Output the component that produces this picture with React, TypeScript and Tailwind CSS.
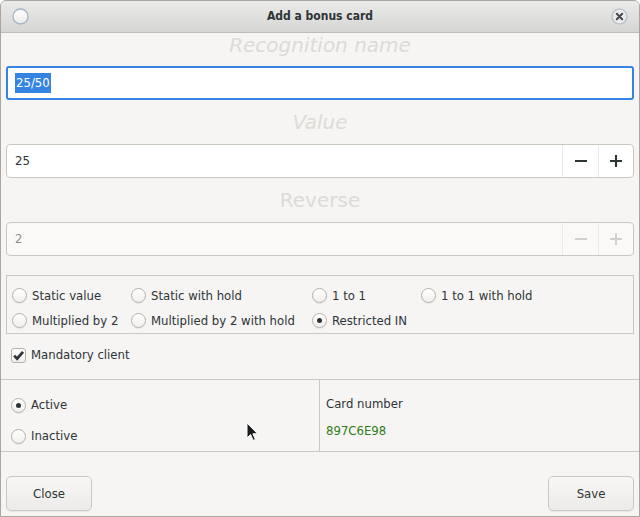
import * as React from 'react';

const font = { fontFamily: '"DejaVu Sans Condensed", "DejaVu Sans", sans-serif' };
const wideFont = { fontFamily: '"DejaVu Sans", sans-serif' };

const Radio: React.FC<{ checked?: boolean }> = ({ checked }) => (
    <span className="relative inline-flex h-[15px] w-[15px] shrink-0 items-center justify-center rounded-full border border-[#b6b1ab] bg-gradient-to-b from-white to-[#f1efed] shadow-[0_1px_0_rgba(0,0,0,0.06)]">
        {checked && <span className="h-[5px] w-[5px] rounded-full bg-[#2e3436]" />}
    </span>
);

const RadioOption: React.FC<{ label: string; checked?: boolean; className?: string }> = ({ label, checked, className }) => (
    <label className={`flex items-center gap-[5px] text-[13px] text-[#2e3436] ${className ?? ''}`}>
        <Radio checked={checked} />
        <span>{label}</span>
    </label>
);

const Heading: React.FC<{ text: string; italic?: boolean; className?: string }> = ({ text, italic, className }) => (
    <div className={`flex justify-center text-[20px] text-[#dedad6] ${italic ? 'italic' : ''} ${className ?? ''}`} style={wideFont}>
        {text}
    </div>
);

const SpinEntry: React.FC<{ value: string; disabled?: boolean }> = ({ value, disabled }) => {
    const iconColor = disabled ? 'text-[#d3d0cc]' : 'text-[#2e3436]';
    return (
        <div className={`flex h-[34px] rounded-[4px] border border-[#cdc7c2] ${disabled ? 'bg-[#faf9f8]' : 'bg-white'}`}>
            <div className={`flex flex-1 items-center pl-[8px] text-[13px] ${disabled ? 'text-[#8b8e8f]' : 'text-[#2e3436]'}`}>{value}</div>
            <div className={`flex w-[36px] items-center justify-center border-l border-[#ebe9e6] ${iconColor}`}>
                <svg width="12" height="12" viewBox="0 0 12 12"><rect x="0" y="5" width="12" height="2" fill="currentColor" /></svg>
            </div>
            <div className={`flex w-[35px] items-center justify-center border-l border-[#ebe9e6] ${iconColor}`}>
                <svg width="12" height="12" viewBox="0 0 12 12"><rect x="0" y="5" width="12" height="2" fill="currentColor" /><rect x="5" y="0" width="2" height="12" fill="currentColor" /></svg>
            </div>
        </div>
    );
};

const DialogButton: React.FC<{ label: string }> = ({ label }) => (
    <button className="flex h-[35px] w-[86px] items-center justify-center rounded-[5px] border border-[#cdc7c2] bg-gradient-to-b from-[#f8f7f6] to-[#edebe9] text-[13px] text-[#2e3436] shadow-[0_1px_0_rgba(0,0,0,0.05)]">
        {label}
    </button>
);

export default function App() {
    return (
        <div className="relative flex h-[517px] w-[640px] flex-col overflow-hidden rounded-t-[6px] border border-[#aaa59e] bg-[#f6f5f4]" style={font}>
            {/* title bar */}
            <div className="flex h-[32px] shrink-0 items-center justify-between border-b border-[#bfbbb6] bg-gradient-to-b from-[#ebebea] to-[#d5d5d4] px-[11px]">
                <svg width="17" height="17" viewBox="0 0 17 17">
                    <defs>
                        <linearGradient id="wm" x1="0" y1="0" x2="0" y2="1">
                            <stop offset="0" stopColor="#ffffff" />
                            <stop offset="1" stopColor="#ececec" />
                        </linearGradient>
                    </defs>
                    <circle cx="8.5" cy="8.5" r="7.5" fill="url(#wm)" stroke="#a8b3c6" strokeWidth="1.3" />
                </svg>
                <div className="-mt-[2px] text-[12px] font-bold text-[#2e3436]">Add a bonus card</div>
                <svg width="17" height="17" viewBox="0 0 17 17">
                    <circle cx="8.5" cy="8.5" r="7.5" fill="#e9e9ea" stroke="#b2bbcb" strokeWidth="1.2" />
                    <path d="M5.8 5.8 L11.2 11.2 M11.2 5.8 L5.8 11.2" stroke="#45484d" strokeWidth="2" strokeLinecap="round" />
                </svg>
            </div>

            <div className="flex flex-col px-[5px]">
                <Heading text="Recognition name" italic className="h-[33px] items-start leading-[24px]" />
                <div className="flex h-[34px] items-center rounded-[3px] border-2 border-[#3584e4] bg-white pl-[7px] text-[13px]">
                    <span className="bg-[#3584e4] px-[1px] leading-[20px] text-white">25/50</span>
                </div>
                <Heading text="Value" italic className="h-[44px] items-center" />
                <SpinEntry value="25" />
                <Heading text="Reverse" className="h-[44px] items-center" />
                <SpinEntry value="2" disabled />

                <div className="mt-[19px] grid h-[59px] grid-cols-[119px_181px_109px_1fr] grid-rows-[25px_25px] border border-[#cdc7c2] pl-[5px] pt-[7px]">
                    <RadioOption label="Static value" />
                    <RadioOption label="Static with hold" />
                    <RadioOption label="1 to 1" />
                    <RadioOption label="1 to 1 with hold" />
                    <RadioOption label="Multiplied by 2" />
                    <RadioOption label="Multiplied by 2 with hold" />
                    <RadioOption label="Restricted IN" checked />
                </div>

                <label className="mt-[9px] flex h-[24px] items-center gap-[5px] pl-[5px] text-[13px] text-[#2e3436]">
                    <span className="flex h-[15px] w-[15px] items-center justify-center rounded-[3px] border border-[#b6b1ab] bg-gradient-to-b from-white to-[#f1efed]">
                        <svg width="13" height="13" viewBox="0 0 13 13">
                            <path d="M2.2 6.6 L5.1 9.6 L11 2.8" fill="none" stroke="#2e3436" strokeWidth="2.8" />
                        </svg>
                    </span>
                    <span>Mandatory client</span>
                </label>
            </div>

            <div className="mt-[12px] grid h-[73px] grid-cols-[319px_1fr] border-y border-[#cdc7c2]">
                <div className="flex flex-col border-r border-[#cdc7c2] pl-[10px] pt-[9px]">
                    <RadioOption label="Active" checked className="h-[32px]" />
                    <RadioOption label="Inactive" className="h-[30px]" />
                </div>
                <div className="flex flex-col gap-[7px] pl-[6px] pt-[14px] text-[13px]">
                    <div className="text-[#2e3436]">Card number</div>
                    <div className="text-[#2f7d18]">897C6E98</div>
                </div>
            </div>

            <div className="mt-[24px] flex justify-between px-[5px]">
                <DialogButton label="Close" />
                <DialogButton label="Save" />
            </div>

            {/* mouse pointer */}
            <svg className="absolute left-[245px] top-[421px]" width="13" height="20" viewBox="0 0 13 20">
                <path d="M1 1 L1 16 L4.6 12.6 L7.2 18.4 L9.4 17.4 L6.9 11.8 L11.6 11.8 Z" fill="#1a1a1a" stroke="#ffffff" strokeWidth="1" strokeLinejoin="round" />
            </svg>
        </div>
    );
}
